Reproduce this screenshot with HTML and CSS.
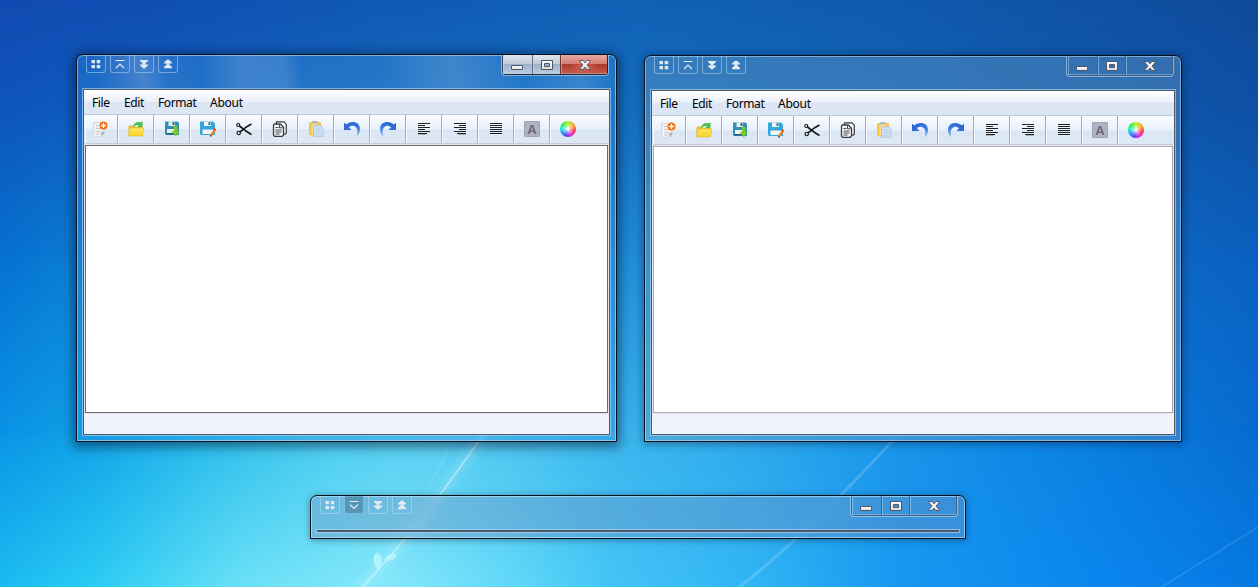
FILE: index.html
```
<!DOCTYPE html>
<html lang="en">
<head>
<meta charset="utf-8">
<title>Desktop</title>
<link rel="stylesheet" href="styles.css">
</head>
<body>
<svg class="defs" width="0" height="0" aria-hidden="true">
  <defs>
    <linearGradient id="fold" x1="0" y1="0" x2="0" y2="1"><stop offset="0" stop-color="#ffe760"/><stop offset="1" stop-color="#f7cf2c"/></linearGradient>
    <linearGradient id="blue" x1="0" y1="0" x2="1" y2="1"><stop offset="0" stop-color="#2560cc"/><stop offset=".6" stop-color="#3a78e0"/><stop offset="1" stop-color="#8cc4f4"/></linearGradient>
    <linearGradient id="glyph" x1="0" y1="0" x2="0" y2="1"><stop offset="0" stop-color="#fff"/><stop offset="1" stop-color="#dcdcdc"/></linearGradient>
    <symbol id="i-new" viewBox="0 0 16 16">
      <path d="M1.500 1.500h10v10l-3 4h-7z" fill="#f1f1f1" stroke="#d8d8da"/>
      <path d="M4 4.500h3M4 7.500h5M4 10.500h5M4 13h4" stroke="#c9c9cc"/>
      <path d="M13 11l-3.500 4.500V11z" fill="#a8a8aa"/>
      <circle cx="11.500" cy="4.500" r="4" fill="#f0701c"/>
      <path d="M11.500 2v5M9 4.500h5" stroke="#fff" stroke-width="1.300"/>
    </symbol>
    <symbol id="i-open" viewBox="0 0 16 16">
      <path d="M0.500 14.500v-9l1-1h4l1.500 1.500h8v8.500z" fill="#e8bf30"/>
      <path d="M5 5.500C6 2 9 0 12.500 1.500L14.500 0v6H9l2-1.800C9 3.500 7 4 6 6z" fill="#4cc04c"/>
      <path d="M.5 15l1.500-8h13.700l-1.200 8z" fill="url(#fold)" stroke="#e0b92a" stroke-width=".5"/>
    </symbol>
    <symbol id="i-save" viewBox="0 0 16 16">
      <path d="M1 .5h12.500L15 2v12H2l-1-1z" fill="#2f8fb6"/>
      <path d="M4.500.5h6.500v4.500H4.500z" fill="#e9eef2"/><path d="M8.500 1h2v3h-2z" fill="#246a8c"/>
      <path d="M3 8h9v4H3z" fill="#f0f0ee"/><path d="M2.500 12h10v1.500h-10z" fill="#2b5870"/>
      <path d="M10 5h3.500v5H16l-4.200 5.500L7.500 10H10z" fill="#76c928"/>
    </symbol>
    <symbol id="i-saveas" viewBox="0 0 16 16">
      <path d="M0 .5h13L15 2.500V14H1l-1-1z" fill="#34a6dc"/>
      <path d="M4 .5h7v4.500H4z" fill="#edf5fa"/><path d="M8.500 1h2v3h-2z" fill="#2986b8"/>
      <path d="M2.500 8.500h10.500V13H2.500z" fill="#f4f4f2"/>
      <path d="M10 15.500l.8-3 3.700-4.800 1.500 1.500-3.500 5z" fill="#f2861c"/><path d="M10 15.800l.7-2 1.500 1.200z" fill="#333"/><path d="M14 7.500l1.800 1.600" stroke="#e24a2a" stroke-width="1.500"/>
    </symbol>
    <symbol id="i-cut" viewBox="0 0 16 16">
      <g fill="none" stroke="#111">
        <circle cx="2.200" cy="4" r="1.500" stroke-width="1.100"/><circle cx="2.700" cy="12" r="1.700" stroke-width="1.100"/>
        <path d="M3.500 5c3 2 6 5.500 12 8.500M4.200 11C7 8.500 10 5.500 15.500 3" stroke-width="1.600"/>
      </g>
    </symbol>
    <symbol id="i-copy" viewBox="0 0 16 16">
      <g fill="#f4f6f9" stroke="#3c3c3c">
        <path d="M4.500.8h7.500l2.300 2.400v9l-1.300 1H4.500z" stroke-width="1.200"/>
        <path d="M1.500 4l1-1h5.700l3.300 3.200v7.800l-1.200 1.300H2.500L1.500 14z" stroke-width="1.300"/>
      </g>
      <path d="M3.500 6.500h3M3.500 9h6M3.500 11h6M3.500 13h4" stroke="#333" stroke-width=".9"/><path d="M7.500 3.500V6.800h3" fill="none" stroke="#444"/>
    </symbol>
    <symbol id="i-paste" viewBox="0 0 16 16">
      <path d="M2 1h10l1 1v12.500H2.500l-1.500-1V2z" fill="#f6c53a"/><path d="M3.500 2.500h7V13h-7z" fill="#fbe08c"/>
      <path d="M4 0h5.500v2.500H4z" fill="#b4bac4"/>
      <path d="M5.500 4.500h7l2.500 2V15.300H5.500z" fill="#cfe0f4" stroke="#a6c0de" stroke-width=".8"/>
      <path d="M7 8h6M7 10.500h6.500M7 13h6.500" stroke="#b6cce6" stroke-width=".8"/>
    </symbol>
    <symbol id="i-undo" viewBox="0 0 16 16">
      <path d="M0 1.500l2 2C6.500-.5 14.500 0 16 6.500c.6 3.500-.8 6.500-3.300 8.500C14 11 13.800 7 10.500 5.200 8.500 4.200 6.500 4.800 5 6.200L7.500 9H0z" fill="url(#blue)"/>
    </symbol>
    <symbol id="i-redo" viewBox="0 0 16 16"><g transform="matrix(-1 0 0 1 16 0)"><path d="M0 1.500l2 2C6.500-.5 14.500 0 16 6.500c.6 3.500-.8 6.500-3.300 8.500C14 11 13.800 7 10.500 5.200 8.500 4.200 6.500 4.800 5 6.200L7.500 9H0z" fill="url(#blue)"/></g></symbol>
    <symbol id="i-left" viewBox="0 0 16 16"><path d="M2 2.500h12M2 4.500h7M2 6.500h12M2 8.500h7M2 10.500h12M2 12.500h9" stroke="#222"/><path d="M2 13.500h8" stroke="#777" stroke-opacity=".5"/></symbol>
    <symbol id="i-right" viewBox="0 0 16 16"><path d="M2 2.500h12M7 4.500h7M2 6.500h12M7 8.500h7M2 10.500h12M5 12.500h9" stroke="#222"/><path d="M6 13.500h8" stroke="#777" stroke-opacity=".5"/></symbol>
    <symbol id="i-just" viewBox="0 0 16 16"><path d="M2 2.500h12M2 4.500h12M2 6.500h12M2 8.500h12M2 10.500h12M2 12.500h12" stroke="#222"/></symbol>
    <symbol id="g-grid" viewBox="0 0 12 12"><path d="M1.500 2H5v3.300H1.500zM6.700 2h3.500v3.300H6.700zM1.500 7H5v3.300H1.500zM6.700 7h3.500v3.300H6.700z"/></symbol>
    <symbol id="g-up" viewBox="0 0 12 12"><path d="M1.500 2.500h9M2 10l4-4 4 4" fill="none" stroke="#e1e9f2" stroke-width="1.200"/></symbol>
    <symbol id="g-down" viewBox="0 0 12 12"><path d="M1.500 2.500h9M2 5.500l4 4 4-4" fill="none" stroke="#e1e9f2" stroke-width="1.200"/></symbol>
    <symbol id="g-ddown" viewBox="0 0 12 12"><path d="M2 2h8v1L7.300 5.500V6.500H10v1L6.500 10.500h-1L2 7.500v-1h2.700v-1L2 3z"/></symbol>
    <symbol id="g-dup" viewBox="0 0 12 12"><path d="M5.500 1.500h1L10 4.500v1H7.300v1L10 9v1.300H2V9l2.700-2.500v-1H2v-1z"/></symbol>
    <symbol id="c-min" viewBox="0 0 12 10"><rect x=".5" y="5.500" width="11" height="4" rx=".5" fill="url(#glyph)" stroke="#535666"/></symbol>
    <symbol id="c-max" viewBox="0 0 12 10"><path d="M.5.500h11v9H.5zM3.500 3.500v3h5v-3z" fill="url(#glyph)" fill-rule="evenodd"/><path d="M.5.500h11v9H.5zM3.500 3.500v3h5v-3z" fill="none" stroke="#535666"/></symbol>
    <symbol id="c-close" viewBox="0 0 12 10"><path d="M1 .5h3L6 2.800 8 .5h3v1L8.200 5 11 8.500v1H8L6 7.200 4 9.500H1v-1L3.800 5 1 1.500z" fill="url(#glyph)" stroke="#535666"/></symbol>
  </defs>
</svg>

<main class="desktop">
  <div class="band band-mid"></div>
  <div class="band band-low"></div>
  <div class="band band-floor"></div>
  <svg class="band" viewBox="0 0 1258 587" aria-hidden="true">
    <defs><filter id="soft" x="-20%" y="-20%" width="140%" height="140%"><feGaussianBlur stdDeviation="5"/></filter></defs>
    <g fill="none" stroke="#fff" stroke-linecap="round">
      <path d="M490 424C450 484 415 530 358 592" stroke-width="8" stroke-opacity=".2" filter="url(#soft)"/>
      <path d="M490 424C450 484 415 530 358 592" stroke-width="1.400" stroke-opacity=".45"/>
      <path d="M462 424L425 495" stroke-opacity=".18"/>
      <path d="M908 424C860 477 800 540 736 590" stroke-width="3" stroke-opacity=".17"/>
      <path d="M1160 588L1260 526" stroke-width="1.500" stroke-opacity=".13"/>
    </g>
    <path d="M378 570c-6-6-6-15-1-18 6 3 7 12 1 18zM384 560c2-5 8-7 13-6-1 6-8 8-13 6z" fill="#c0f8fc" fill-opacity=".75"/>
  </svg>

  <section class="window active w1">
    <header class="titlebar">
      <div class="tools">
        <span class="tool"><svg><use href="#g-grid"/></svg></span><span class="tool"><svg><use href="#g-up"/></svg></span><span class="tool"><svg><use href="#g-ddown"/></svg></span><span class="tool"><svg><use href="#g-dup"/></svg></span>
      </div>
      <div class="caption">
        <span class="cap min"><svg><use href="#c-min"/></svg></span><span class="cap max"><svg><use href="#c-max"/></svg></span><span class="cap close"><svg><use href="#c-close"/></svg></span>
      </div>
    </header>
    <div class="client">
      <nav class="menu"><span>File</span><span>Edit</span><span>Format</span><span>About</span></nav>
      <div class="toolbar">
        <span class="btn"><svg><use href="#i-new"/></svg></span><span class="btn"><svg><use href="#i-open"/></svg></span><span class="btn"><svg><use href="#i-save"/></svg></span><span class="btn"><svg><use href="#i-saveas"/></svg></span><span class="btn"><svg><use href="#i-cut"/></svg></span><span class="btn"><svg><use href="#i-copy"/></svg></span><span class="btn"><svg><use href="#i-paste"/></svg></span><span class="btn"><svg><use href="#i-undo"/></svg></span><span class="btn"><svg><use href="#i-redo"/></svg></span><span class="btn"><svg><use href="#i-left"/></svg></span><span class="btn"><svg><use href="#i-right"/></svg></span><span class="btn"><svg><use href="#i-just"/></svg></span><span class="btn"><b class="font">A</b></span><span class="btn"><i class="wheel"></i></span>
      </div>
      <div class="editor"></div>
      <footer class="status"></footer>
    </div>
  </section>

  <section class="window w2">
    <header class="titlebar">
      <div class="tools">
        <span class="tool"><svg><use href="#g-grid"/></svg></span><span class="tool"><svg><use href="#g-up"/></svg></span><span class="tool"><svg><use href="#g-ddown"/></svg></span><span class="tool"><svg><use href="#g-dup"/></svg></span>
      </div>
      <div class="caption">
        <span class="cap min"><svg><use href="#c-min"/></svg></span><span class="cap max"><svg><use href="#c-max"/></svg></span><span class="cap close"><svg><use href="#c-close"/></svg></span>
      </div>
    </header>
    <div class="client">
      <nav class="menu"><span>File</span><span>Edit</span><span>Format</span><span>About</span></nav>
      <div class="toolbar">
        <span class="btn"><svg><use href="#i-new"/></svg></span><span class="btn"><svg><use href="#i-open"/></svg></span><span class="btn"><svg><use href="#i-save"/></svg></span><span class="btn"><svg><use href="#i-saveas"/></svg></span><span class="btn"><svg><use href="#i-cut"/></svg></span><span class="btn"><svg><use href="#i-copy"/></svg></span><span class="btn"><svg><use href="#i-paste"/></svg></span><span class="btn"><svg><use href="#i-undo"/></svg></span><span class="btn"><svg><use href="#i-redo"/></svg></span><span class="btn"><svg><use href="#i-left"/></svg></span><span class="btn"><svg><use href="#i-right"/></svg></span><span class="btn"><svg><use href="#i-just"/></svg></span><span class="btn"><b class="font">A</b></span><span class="btn"><i class="wheel"></i></span>
      </div>
      <div class="editor"></div>
      <footer class="status"></footer>
    </div>
  </section>

  <section class="window w3">
    <header class="titlebar">
      <div class="tools">
        <span class="tool"><svg><use href="#g-grid"/></svg></span><span class="tool pressed"><svg><use href="#g-down"/></svg></span><span class="tool"><svg><use href="#g-ddown"/></svg></span><span class="tool"><svg><use href="#g-dup"/></svg></span>
      </div>
      <div class="caption">
        <span class="cap min"><svg><use href="#c-min"/></svg></span><span class="cap max"><svg><use href="#c-max"/></svg></span><span class="cap close"><svg><use href="#c-close"/></svg></span>
      </div>
    </header>
    <div class="client rolled"></div>
  </section>
</main>
</body>
</html>
```
FILE: styles.css
```
* { box-sizing: border-box; }
html, body { margin: 0; height: 100%; overflow: hidden; }
body { font: 12px/16px "Noto Sans", "Open Sans", sans-serif; color: #000; }
svg { display: block; }
.defs { position: absolute; }

/* Wallpaper: horizontal colour bands, cross-faded vertically */
.desktop {
  position: relative; width: 1258px; height: 587px; overflow: hidden; isolation: isolate;
  background: linear-gradient(92deg, #124ab2 0, #104eb4 150px, #105ab4 400px, #1061b6 640px, #105aae 900px, #104a9a 1258px);
}
.band { position: absolute; left: 0; top: 0; width: 1258px; height: 587px; }
.band-mid {
  background: linear-gradient(90deg, #0570cf 0, #0a7cd4 70px, #2a8fd8 400px, #1e8cd8 640px, #1678cc 900px, #0a60c0 1258px);
  mask-image: linear-gradient(180deg, transparent 0, rgba(0,0,0,.3) 110px, #000 260px);
}
.band-low {
  background: linear-gradient(90deg, #0a94e6 0, #12a4e8 100px, #26baec 200px, #4accf0 330px, #58cef2 430px, #3eb8ee 600px, #32acec 720px, #1c98ea 870px, #0f88e6 1010px, #0a7cde 1120px, #076cd0 1258px);
  mask-image: linear-gradient(180deg, transparent 250px, #000 445px);
}
.band-floor {
  background: linear-gradient(90deg, #1cbaf0 0, #2cccf4 95px, #6ae0f6 240px, #86e8fa 390px, #62d8f8 510px, #44c4f6 610px, #30b4f4 760px, #1898f0 900px, #0a86ee 1100px, #0678e2 1258px);
  mask-image: linear-gradient(180deg, transparent 430px, #000 587px);
}

.window {
  position: absolute; display: flex; flex-direction: column;
  padding: 0 5px 5px; border: 1px solid #061018; border-radius: 7px 7px 0 0;
  background: rgba(105,155,192,.4);
  backdrop-filter: blur(4px);
  box-shadow: inset 0 0 0 1px rgba(200,228,250,.5), 0 1px 8px 1px rgba(0,15,40,.4);
}
.w1 { left: 76px; top: 54px; width: 541px; height: 388px; }
.w2 { left: 644px; top: 55px; width: 538px; height: 387px; }
.w3 { left: 310px; top: 495px; width: 656px; height: 44px; background: rgba(112,146,192,.4); box-shadow: inset 0 0 0 1px rgba(200,232,250,.6), 0 1px 7px rgba(0,15,40,.4); }
.window.active {
  background:
    linear-gradient(83deg, transparent 20px, rgba(210,210,225,.24) 68px, rgba(190,205,225,.08) 90px, rgba(255,255,255,.02) 125px, rgba(200,215,230,.2) 165px, rgba(200,215,230,.18) 208px, rgba(255,255,255,.02) 224px, rgba(255,255,255,.02) 300px, rgba(200,215,230,.2) 375px, rgba(255,255,255,.02) 445px, rgba(200,215,230,.16) 500px, transparent 535px) 0 0 / 100% 33px no-repeat,
    rgba(50,140,222,.35);
  box-shadow: inset 0 0 0 1px rgba(180,222,250,.6), 0 2px 11px 3px rgba(0,15,40,.5);
}

.titlebar { flex: none; display: flex; justify-content: space-between; align-items: flex-start; height: 33px; padding: 0 2px 0 4px; }
.tools { display: flex; gap: 4px; }
.tool {
  width: 20px; height: 18px; padding: 3px 0 0 3px;
  border: 1px solid rgba(190,224,248,.5); border-top: 0; border-radius: 0 0 3px 3px;
}
.tool svg { width: 12px; height: 12px; fill: #e1e9f2; }
.tool.pressed { background: rgba(50,95,125,.4); }

.caption {
  display: flex; width: 108px; height: 21px; padding: 0 1px 1px;
  border: 1px solid rgba(190,222,248,.6); border-top: 0; border-radius: 0 0 4px 4px;
  box-shadow: inset 1px 0 #4c5f78, inset -1px 0 #4c5f78, inset 0 -1px #4c5f78;
}
.cap { padding-top: 5px; box-shadow: inset 1px 0 rgba(190,222,248,.5), inset 0 -1px rgba(190,222,248,.35); }
.cap svg { width: 12px; height: 10px; }
.min { width: 29px; padding-left: 8px; }
.max { width: 28px; padding-left: 8px; border-left: 1px solid #4c5f78; }
.close { width: 47px; padding-left: 18px; border-left: 1px solid #4c5f78; }
.active .cap { background: linear-gradient(180deg, #dfe5ec 0, #bdcad9 47%, #9db1c9 50%, #b8cee2 100%); border-color: #5f7185; }
.active .close { background: radial-gradient(ellipse at 50% 60%, rgba(240,120,95,.6), transparent 45%), linear-gradient(180deg, #e6aaa2 0, #d47b72 47%, #ad3a2b 50%, #c65c4c 100%); border-color: #6b3030; }
.active .caption { box-shadow: inset 1px 0 #35485f, inset -1px 0 #202830, inset 0 -1px #202830; }

.client { flex: 1; min-height: 0; display: flex; flex-direction: column; border: 1px solid #4d5868; outline: 1px solid rgba(175,215,245,.65); margin: 1px; background: #f0f3fc; }
.client.rolled { background: #4d5868; }
.menu { flex: none; display: flex; height: 25px; padding: 5px 0 0 8px; border-bottom: 1px solid #bccadc; background: linear-gradient(180deg, #fff 0, #e9eff9 12px, #dbe5f3 12px, #dde7f4 100%); letter-spacing: -.4px; }
.menu span:nth-child(1) { width: 32px; }
.menu span:nth-child(2) { width: 34px; }
.menu span:nth-child(3) { width: 52px; }
.menu span:nth-child(4) { letter-spacing: -.25px; }
.toolbar { flex: none; display: flex; height: 28px; padding: 0 1px; background: linear-gradient(180deg, #fafcff 0, #e8f0fa 14px, #dae6f4 15px, #dee8f5 100%); }
.btn { width: 36px; padding: 6px 0 0 10px; border-right: 1px solid #9fb0c6; box-shadow: inset 1px 0 #f4f9ff; }
.btn:first-child { width: 33px; padding-left: 7px; }
.btn:last-child { border: 0; }
.btn svg { width: 16px; height: 16px; }
.font { display: block; width: 16px; height: 16px; background: #b3b2c5; border: 1px solid #a4a3b6; border-radius: 1px; color: #6d6b7b; font: bold 13px/14px "Open Sans", sans-serif; text-align: center; }
.wheel { display: block; width: 16px; height: 16px; border-radius: 50%; background: radial-gradient(circle, #fff 0, rgba(255,255,255,.35) 35%, transparent 60%), conic-gradient(#b8f020, #f8a030 60deg, #f83050 105deg, #e828d0 150deg, #5038f8 195deg, #20a0f8 240deg, #20f0c0 280deg, #30f040 320deg, #b8f020); }
.editor { flex: 1; border: 1px solid #646b76; background: #fff; margin: 2px 1px 1px; box-shadow: 0 0 0 1px #e4e6ea, 0 -2px #c5ccd6; }
.w2 .editor { border-color: #abadb3; }
.status { flex: none; height: 20px; background: #f0f3fc; }
```
